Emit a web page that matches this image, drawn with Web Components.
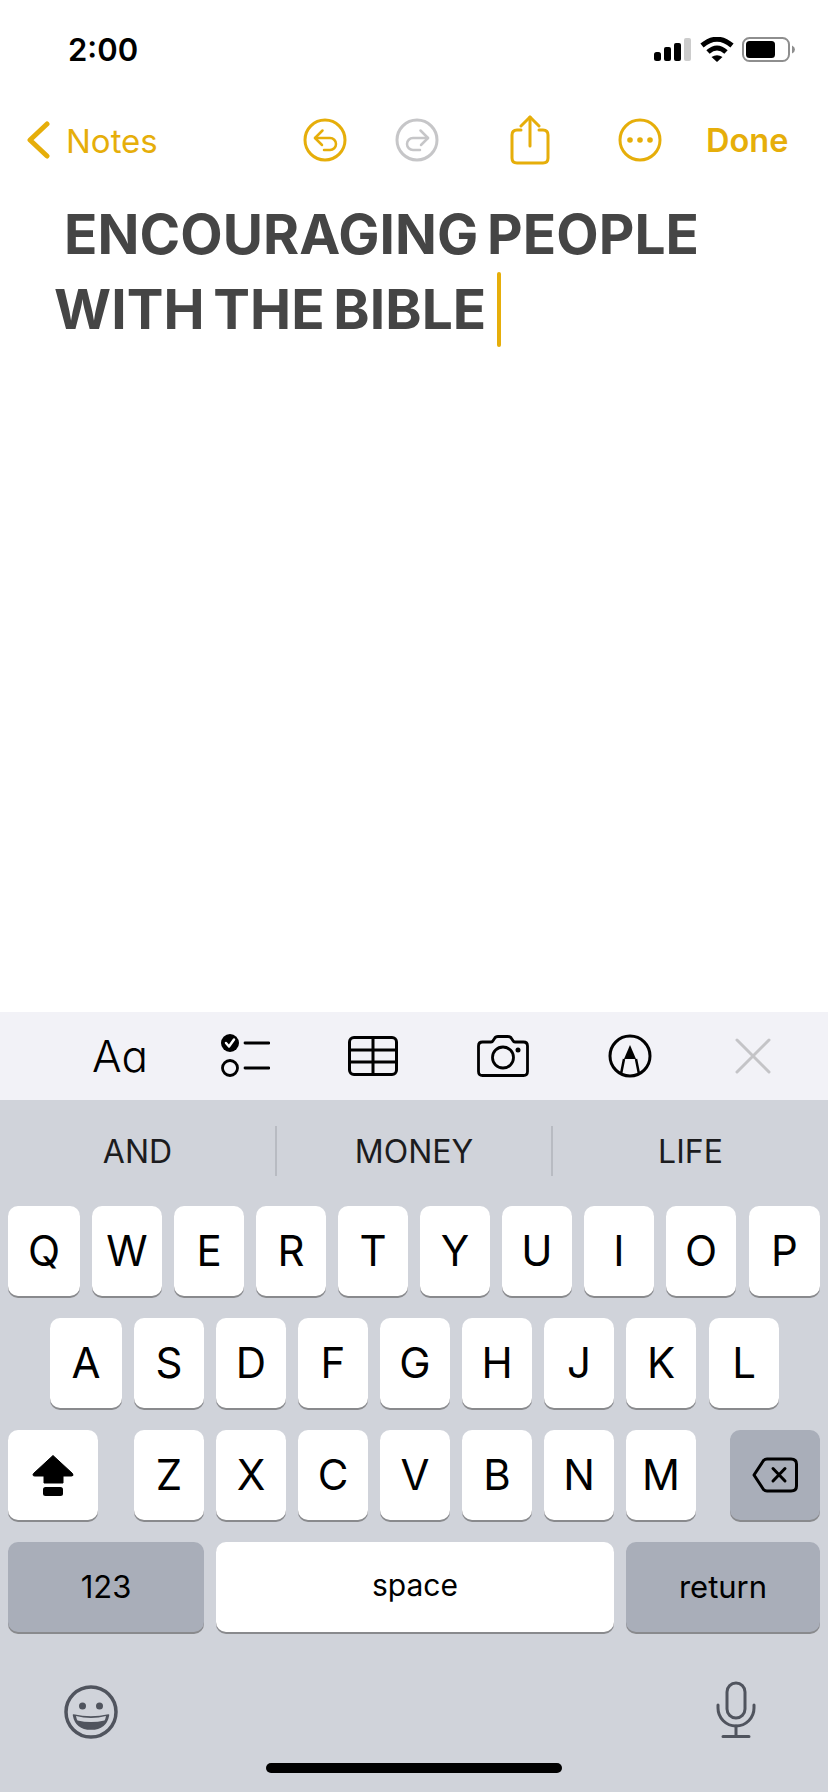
<!DOCTYPE html>
<html lang="en">
<head>
<meta charset="UTF-8">
<title>Notes</title>
<style>
  html, body { margin: 0; padding: 0; background: #fff; }
  body { width: 828px; height: 1792px; display: flex; flex-direction: column; overflow: hidden;
         font-family: Inter, "Liberation Sans", sans-serif; }
</style>
</head>
<body>

<ios-status></ios-status>
<notes-nav></notes-nav>
<note-body> ENCOURAGING PEOPLE
WITH THE BIBLE</note-body>
<format-bar></format-bar>
<ios-keyboard>
  <kb-suggestions></kb-suggestions>
  <kb-row>
    <kb-key w="72">Q</kb-key><kb-key>W</kb-key><kb-key>E</kb-key><kb-key>R</kb-key><kb-key>T</kb-key>
    <kb-key>Y</kb-key><kb-key>U</kb-key><kb-key>I</kb-key><kb-key>O</kb-key><kb-key w="71" style="margin-left:1px">P</kb-key>
  </kb-row>
  <kb-row style="padding-left:50px">
    <kb-key w="72">A</kb-key><kb-key>S</kb-key><kb-key>D</kb-key><kb-key>F</kb-key><kb-key>G</kb-key>
    <kb-key>H</kb-key><kb-key>J</kb-key><kb-key>K</kb-key><kb-key style="margin-left:1px">L</kb-key>
  </kb-row>
  <kb-row>
    <kb-key w="90" style="margin-right:24px">
      <svg width="42" height="42" viewBox="0 0 42 42"><path d="M21 1.5 L40.5 19.5 Q42 22 39.5 22 L31 22 L31 29 L12 29 L12 22 L3 22 Q0 22 1.5 19.5 Z" fill="#000" stroke="#000" stroke-linejoin="round"/><rect x="11" y="33" width="20" height="9" rx="2.5" fill="#000"/></svg>
    </kb-key>
    <kb-key>Z</kb-key><kb-key>X</kb-key><kb-key>C</kb-key><kb-key>V</kb-key><kb-key>B</kb-key><kb-key>N</kb-key><kb-key>M</kb-key>
    <kb-key w="90" fn style="margin-left:22px">
      <svg width="46" height="36" viewBox="0 0 46 36" fill="none" stroke="#000" stroke-width="3" stroke-linejoin="round" stroke-linecap="round"><path d="M15 2 H39 Q44.500 2 44.500 7 V29 Q44.500 34 39 34 H15 Q13 34 11.500 32.500 L2 18 L11.500 3.500 Q13 2 15 2 Z"/><path d="M21 11.500 L33 24 M33 11.500 L21 24"/></svg>
    </kb-key>
  </kb-row>
  <kb-row>
    <kb-key w="196" fn small>123</kb-key>
    <kb-key w="398" small style="font-size:30px;padding-bottom:5px">space</kb-key>
    <kb-key w="194" fn small>return</kb-key>
  </kb-row>
  <kb-bottom></kb-bottom>
</ios-keyboard>

<script>
'use strict'

const YELLOW = '#e6ae0a'

function shadowOf(el, html) {
  el.attachShadow({mode: 'open'}).innerHTML = html
}

customElements.define('ios-status', class extends HTMLElement {
  connectedCallback() {
    shadowOf(this, `<style>
      :host { display: flex; align-items: center; height: 100px; box-sizing: border-box; padding: 0 33px 0 68px; }
      .time { font: 600 31px/1 Inter, sans-serif; color: #000; margin-right: auto; position: relative; top: -1px; }
      svg { display: block; }
    </style>
    <span class="time">2:00</span>
    <svg width="141" height="26" viewBox="0 0 141 26" style="margin-top:-1px">
      <rect x="0" y="15" width="7" height="9" rx="2.500" fill="#000"/>
      <rect x="10" y="10" width="7" height="14" rx="2" fill="#000"/>
      <rect x="20" y="6" width="7" height="18" rx="2" fill="#000"/>
      <rect x="30" y="1" width="7" height="23" rx="2" fill="#ccc"/>
      <g fill="none" stroke="#000" stroke-width="5">
        <path d="M48 8.500 Q63 -4 78 8.500"/>
        <path d="M54 15 Q63 7 72 15"/>
      </g>
      <path d="M57.500 20 Q63 16.500 68.500 20 L63 25 Z" fill="#000"/>
      <rect x="89" y="1" width="46" height="23" rx="6.500" fill="none" stroke="#8e8e8e" stroke-width="2"/>
      <rect x="92" y="4" width="29" height="17" rx="3.500" fill="#000"/>
      <path d="M138 8.500 Q141 10 141 12.500 Q141 15 138 16.500 Z" fill="#8e8e8e"/>
    </svg>`)
  }
})

customElements.define('notes-nav', class extends HTMLElement {
  connectedCallback() {
    shadowOf(this, `<style>
      :host { display: flex; align-items: center; height: 80px; color: ${YELLOW}; font: 400 33px/1 Inter, sans-serif; }
      .back { flex: 0 0 303px; box-sizing: border-box; padding-left: 27px; display: flex; align-items: center; gap: 16px; }
      .back span, .done { padding-top: 2px; }
      .done { font-size: 32.500px; font-weight: 600; margin-left: 44px; }
      svg { display: block; flex: none; }
    </style>
    <div class="back">
      <svg width="23" height="38" viewBox="0 0 23 38" fill="none" stroke="${YELLOW}" stroke-width="5" stroke-linecap="round" stroke-linejoin="round"><path d="M20 3 L3 19 L20 35"/></svg>
      <span>Notes</span>
    </div>
    <svg width="44" height="44" viewBox="0 0 44 44" fill="none" stroke="${YELLOW}" stroke-width="3" stroke-linecap="round" stroke-linejoin="round">
      <circle cx="22" cy="22" r="20"/>
      <path d="M19.500 12.500 L12 20 L19 27" stroke-width="2.500"/><path d="M12 20 H27 A6 6 0 0 1 27 32 H21" stroke-width="2.500"/>
    </svg>
    <svg style="margin-left:48px" width="44" height="44" viewBox="0 0 44 44" fill="none" stroke="#c6c6c8" stroke-width="3" stroke-linecap="round" stroke-linejoin="round">
      <circle cx="22" cy="22" r="20"/>
      <path d="M25.500 12.500 L33 20 L26 27" stroke-width="2.500"/><path d="M33 20 H18 A6 6 0 0 0 18 32 H25" stroke-width="2.500"/>
    </svg>
    <svg style="margin-left:71px" width="40" height="50" viewBox="0 0 40 50" fill="none" stroke="${YELLOW}" stroke-width="3" stroke-linecap="round" stroke-linejoin="round">
      <path d="M11 15 H7 Q2 15 2 20 V43 Q2 48 7 48 H33 Q38 48 38 43 V20 Q38 15 33 15 H29"/>
      <path d="M20 31 V2"/><path d="M11 11 L20 2 L29 11"/>
    </svg>
    <svg style="margin-left:68px" width="44" height="44" viewBox="0 0 44 44">
      <circle cx="22" cy="22" r="20" fill="none" stroke="${YELLOW}" stroke-width="3"/>
      <circle cx="12" cy="22" r="2.800" fill="${YELLOW}"/><circle cx="22" cy="22" r="2.800" fill="${YELLOW}"/><circle cx="32" cy="22" r="2.800" fill="${YELLOW}"/>
    </svg>
    <span class="done">Done</span>`)
  }
})

customElements.define('note-body', class extends HTMLElement {
  connectedCallback() {
    shadowOf(this, `<style>
      :host { display: block; flex: 1; box-sizing: border-box; padding: 17px 0 0 54px; }
      .txt { display: block; text-indent: 1.5px; font: 700 55px/75px Inter, "Liberation Sans", sans-serif; color: #454545; white-space: pre-wrap; letter-spacing: 0.09px; word-spacing: -4.6px; }
      .caret { display: inline-block; width: 4px; height: 75px; margin: -14px 0 -6px 11px; vertical-align: middle; border-radius: 2px; background: ${YELLOW}; }
    </style>
    <span class="txt"><slot></slot><span class="caret"></span></span>`)
  }
})

customElements.define('format-bar', class extends HTMLElement {
  connectedCallback() {
    shadowOf(this, `<style>
      :host { display: flex; align-items: center; height: 88px; background: #f2f2f7; color: #000; }
      .aa { font: 300 44px/1 Inter, sans-serif; font-feature-settings: "cv11"; margin-left: 92px; width: 52px; }
      svg { display: block; flex: none; }
    </style>
    <span class="aa">Aa</span>
    <svg style="margin-left:77px" width="49" height="44" viewBox="0 0 49 44" fill="none" stroke="#000" stroke-width="2.800" stroke-linecap="round">
      <circle cx="9" cy="9" r="9" fill="#000" stroke="none"/>
      <path d="M5 9 L8 12.500 L13 5.500" stroke="#fff" stroke-width="2.500" stroke-linejoin="round"/>
      <circle cx="9" cy="34" r="7.500"/>
      <path d="M24 9 H48 M24 34 H48"/>
    </svg>
    <svg style="margin-left:78px" width="50" height="40" viewBox="0 0 50 40" fill="none" stroke="#000" stroke-width="3">
      <rect x="1.500" y="1.500" width="47" height="37" rx="4.500"/>
      <path d="M1.500 14 H48.500 M1.500 26 H48.500 M25 1.500 V38.500"/>
    </svg>
    <svg style="margin-left:79px" width="52" height="42" viewBox="0 0 52 42" fill="none" stroke="#000" stroke-width="2.800" stroke-linejoin="round">
      <path d="M5.500 7 H14 Q15.500 7 16.500 5 L17.500 3.500 Q18.500 1.500 21 1.500 H31 Q33.500 1.500 34.500 3.500 L35.500 5 Q36.500 7 38 7 H46.500 Q50.500 7 50.500 11 V36.500 Q50.500 40.500 46.500 40.500 H5.500 Q1.500 40.500 1.500 36.500 V11 Q1.500 7 5.500 7 Z"/>
      <circle cx="26" cy="22.500" r="10.500"/>
      <circle cx="41" cy="15" r="2.500" fill="#000" stroke="none"/>
    </svg>
    <svg style="margin-left:79px" width="44" height="44" viewBox="0 0 44 44" fill="none" stroke="#000" stroke-width="3">
      <circle cx="22" cy="22" r="20"/>
      <path d="M22 11 L28 25 H16 Z" fill="#000" stroke="none"/>
      <path d="M16 25 L13 40 M28 25 L31 40" stroke-width="2.500"/>
    </svg>
    <svg style="margin-left:83px" width="36" height="36" viewBox="0 0 36 36" fill="none" stroke="#c4c4c7" stroke-width="3" stroke-linecap="round">
      <path d="M2 2 L34 34 M34 2 L2 34"/>
    </svg>`)
  }
})

customElements.define('ios-keyboard', class extends HTMLElement {
  connectedCallback() {
    shadowOf(this, `<style>
      :host { display: flex; flex-direction: column; height: 692px; background: #d0d3da; }
    </style><slot></slot>`)
  }
})

customElements.define('kb-suggestions', class extends HTMLElement {
  connectedCallback() {
    shadowOf(this, `<style>
      :host { display: grid; grid-template-columns: 275px 276px 1fr; height: 106px; box-sizing: border-box; padding-top: 26px; }
      div { display: flex; align-items: center; justify-content: center; height: 50px; color: #1c1c1e; font: 400 32px/1 Inter, sans-serif; box-sizing: border-box; padding-top: 2px; }
      div + div { border-left: 2px solid #b8bbc2; }
    </style><div>AND</div><div>MONEY</div><div>LIFE</div>`)
  }
})

customElements.define('kb-row', class extends HTMLElement {
  connectedCallback() {
    shadowOf(this, `<style>
      :host { display: flex; gap: 12px; height: 90px; padding: 0 8px; margin-bottom: 22px; }
    </style><slot></slot>`)
  }
})

customElements.define('kb-key', class extends HTMLElement {
  connectedCallback() {
    const w = this.getAttribute('w') || 70
    shadowOf(this, `<style>
      :host { display: flex; align-items: center; justify-content: center; flex: none; box-sizing: border-box; width: ${w}px; height: 90px;
              background: #fff; border-radius: 10px; box-shadow: 0 2px 0 #898a8d; color: #000;
              font: 400 42px/1 Inter, sans-serif; }
      :host([fn]) { background: #a9aeb9; }
      :host([small]) { font-size: 31px; padding-bottom: 2px; }
      ::slotted(svg) { display: block; }
    </style><slot></slot>`)
  }
})

customElements.define('kb-bottom', class extends HTMLElement {
  connectedCallback() {
    shadowOf(this, `<style>
      :host { display: flex; flex-direction: column; flex: 1; }
      .icons { display: flex; justify-content: space-between; align-items: center; padding: 0 72px 0 64px; margin-top: 26px; height: 60px; }
      .bar { width: 296px; height: 10px; border-radius: 5px; background: #000; margin: 23px auto 0; }
      svg { display: block; }
    </style>
    <div class="icons">
      <svg style="margin-top:4px" width="54" height="54" viewBox="0 0 54 54">
        <circle cx="27" cy="27" r="25" fill="none" stroke="#50545e" stroke-width="3.500"/>
        <circle cx="18.500" cy="21" r="3.500" fill="#50545e"/><circle cx="35.500" cy="21" r="3.500" fill="#50545e"/>
        <path d="M9.500 30 Q27 34 44.500 30 Q42 44 27 44 Q12 44 9.500 30 Z" fill="#50545e" stroke="#50545e" stroke-width="1.500" stroke-linejoin="round"/>
        <path d="M12 31 Q27 35 42 31 Q41.500 34 40.500 35.500 Q27 38.500 13.500 35.500 Q12.500 34 12 31 Z" fill="#d0d3da"/>
      </svg>
      <svg width="40" height="58" viewBox="0 0 40 58" fill="none" stroke="#50545e" stroke-width="3" stroke-linecap="round">
        <rect x="11" y="2" width="18" height="35" rx="9"/>
        <path d="M2 24 V27 A18 18 0 0 0 38 27 V24"/>
        <path d="M20 45 V55 M7 55.500 H33" />
      </svg>
    </div>
    <div class="bar"></div>`)
  }
})
</script>
</body>
</html>
